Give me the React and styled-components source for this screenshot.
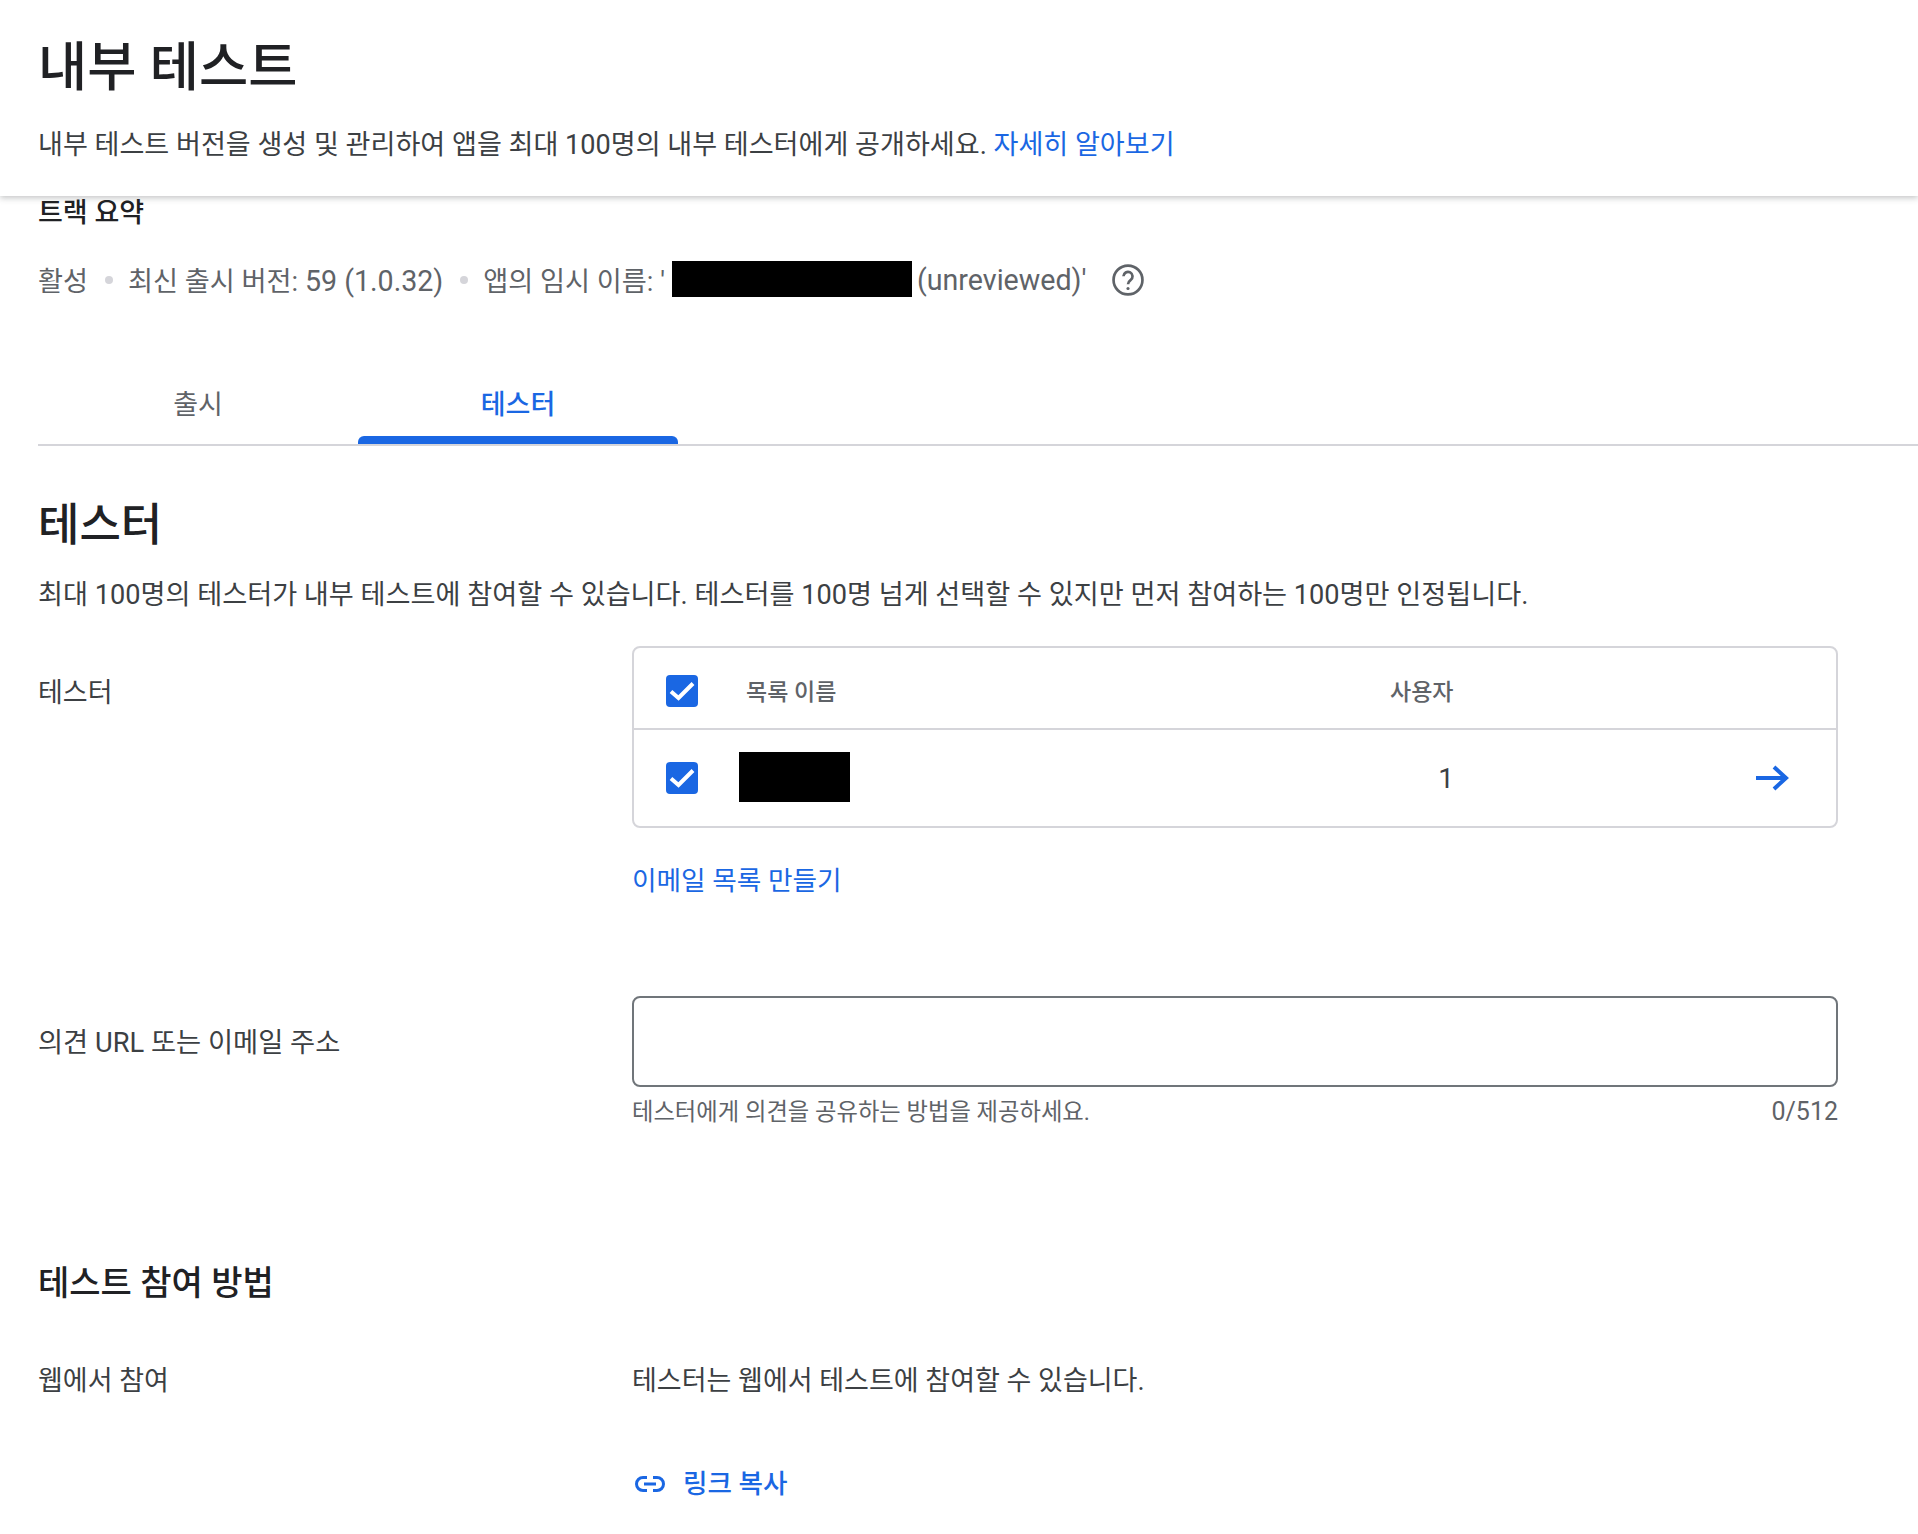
import React from "react"
import styled, { createGlobalStyle } from "styled-components"

const BLUE = "#1a67e3"
const FONT = `Roboto, "Noto Sans CJK KR", sans-serif`

const GlobalStyle = createGlobalStyle`
  html, body { margin: 0; padding: 0; background: #fff; }
  body { font-family: ${FONT}; color: #202124; overflow: hidden; }
  * { box-sizing: border-box; }
`

const Page = styled.div`
  width: 1918px;
  height: 1534px;
  overflow: hidden;
`

const Header = styled.header`
  height: 196px;
  padding: 34px 0 0 38px;
  box-shadow: 0 2px 6px rgba(60, 64, 67, 0.3);
  position: relative;
`

const Title = styled.h1`
  margin: 0;
  font-size: 53.5px;
  line-height: 68px;
  font-weight: 500;
  color: #202124;
`

const Lead = styled.p`
  margin: 25px 0 0;
  font-size: 27.08px;
  line-height: 36px;
  color: #3c4043;
`

const Link = styled.a`
  color: ${BLUE};
  text-decoration: none;
`

const Main = styled.main`
  padding-left: 38px;
`

const TrackTitle = styled.h3`
  margin: 0;
  padding-top: 1px;
  font-size: 27px;
  line-height: 32px;
  font-weight: 500;
  color: #202124;
`

const Status = styled.div`
  display: flex;
  align-items: center;
  height: 40px;
  margin-top: 30px;
  font-size: 27.2px;
  color: #5f6368;
`

const Latin = styled.span`
  font-size: 28.6px;
  white-space: pre;
`

const Unreviewed = styled(Latin)`
  margin-left: -2px;
  padding-top: 2px;
`

const Dot = styled.span`
  width: 8px;
  height: 8px;
  margin: 2px 15px 0 17px;
  border-radius: 50%;
  background: #d5d5da;
`

const Redact = styled.span`
  display: block;
  flex: none;
  width: ${(p) => p.$w}px;
  height: ${(p) => p.$h}px;
  background: #000;
`

const RedactStatus = styled(Redact)`
  margin-left: 7px;
`

const HelpIcon = styled.svg`
  width: 34px;
  height: 34px;
  margin: 2px 0 0 25px;
  color: #5f6368;
`

const Tabs = styled.nav`
  display: flex;
  height: 84px;
  margin-top: 63px;
  border-bottom: 2px solid #d5d5da;
`

const Tab = styled.div`
  position: relative;
  width: 320px;
  padding-top: 25px;
  font-size: 27px;
  line-height: 36px;
  text-align: center;
  color: ${(p) => (p.$active ? BLUE : "#5f6368")};
  font-weight: ${(p) => (p.$active ? 500 : 400)};

  ${(p) =>
    p.$active &&
    `
    &::after {
      content: "";
      position: absolute;
      left: 0;
      right: 0;
      bottom: 0;
      height: 8px;
      border-radius: 6px 6px 0 0;
      background: ${BLUE};
    }
  `}
`

const Heading = styled.h2`
  margin: 52px 0 0;
  font-size: 45px;
  line-height: 56px;
  font-weight: 500;
  color: #202124;
`

const Paragraph = styled.p`
  margin: 23px 0 0;
  font-size: 27.17px;
  line-height: 36px;
  color: #3c4043;
`

const FormRow = styled.div`
  display: grid;
  grid-template-columns: 594px 1206px;
  margin-top: ${(p) => p.$top}px;
`

const Label = styled.div`
  padding-top: ${(p) => p.$pad || 0}px;
  font-size: ${(p) => p.$size || 27}px;
  line-height: 36px;
  color: #3c4043;
`

const Table = styled.div`
  height: 182px;
  border: 2px solid #d5d5da;
  border-radius: 8px;
`

const TableRow = styled.div`
  display: grid;
  grid-template-columns: 32px 692px 64px 1fr;
  align-items: center;
  height: ${(p) => p.$h}px;
  padding: ${(p) => p.$top || 0}px 46px 0 32px;
  border-bottom: ${(p) => (p.$line ? "2px solid #d5d5da" : "none")};
`

const Check = styled.svg`
  width: 32px;
  height: 32px;
`

const HeadCell = styled.div`
  padding-bottom: 2px;
  padding-left: ${(p) => p.$pad || 0}px;
  font-size: 23px;
  font-weight: 500;
  color: #5f6368;
`

const NameCell = styled.div`
  padding: 0 0 2px 41px;
`

const CountCell = styled.div`
  padding-top: 1px;
  font-size: 28px;
  color: #3c4043;
  text-align: right;
`

const ArrowCell = styled.div`
  display: flex;
  justify-content: flex-end;
`

const ArrowIcon = styled.svg`
  width: 36px;
  height: 28px;
`

const CreateLink = styled(Link)`
  display: block;
  margin-top: 35px;
  font-size: 26.7px;
  line-height: 36px;
`

const InputBox = styled.div`
  height: 91px;
  border: 2px solid #70757a;
  border-radius: 8px;
`

const Hints = styled.div`
  display: flex;
  justify-content: space-between;
  align-items: baseline;
  margin-top: 10px;
  font-size: 23.3px;
  line-height: 30px;
  color: #5f6368;
`

const Counter = styled.span`
  font-size: 25px;
`

const SubHeading = styled.h3`
  margin: 133px 0 0;
  font-size: 34px;
  line-height: 46px;
  font-weight: 500;
  color: #202124;
`

const Body = styled.div`
  font-size: 27px;
  line-height: 36px;
  color: #3c4043;
`

const CopyLink = styled(Link)`
  display: flex;
  align-items: center;
  gap: 18px;
  margin-top: 67px;
  padding-left: 3px;
  font-size: 26.6px;
  line-height: 36px;
  font-weight: 500;
`

const Checkbox = () => (
  <Check viewBox="0 0 32 32">
    <rect width="32" height="32" rx="4" fill={BLUE} />
    <path d="M5 16.5l7.5 6.5L27 8.5" fill="none" stroke="#fff" strokeWidth="4" />
  </Check>
)

const App = () => (
  <Page>
    <GlobalStyle />
    <Header>
      <Title>내부 테스트</Title>
      <Lead>
        내부 테스트 버전을 생성 및 관리하여 앱을 최대 100명의 내부 테스터에게 공개하세요.{" "}
        <Link href="#">자세히 알아보기</Link>
      </Lead>
    </Header>
    <Main>
      <TrackTitle>트랙 요약</TrackTitle>
      <Status>
        활성
        <Dot />
        <span>
          최신 출시 버전: <Latin>59 (1.0.32)</Latin>
        </span>
        <Dot />
        앱의 임시 이름: '
        <RedactStatus $w={240} $h={36} />
        <Unreviewed> (unreviewed)'</Unreviewed>
        <HelpIcon viewBox="0 0 24 24" fill="none" stroke="currentColor">
          <circle cx="12" cy="12" r="10.2" strokeWidth="1.9" />
          <path d="M8.8 9.4a3.2 3.2 0 1 1 5 2.7c-1.1.8-1.8 1.4-1.8 2.9" strokeWidth="1.9" />
          <circle cx="12" cy="18" r="1.1" fill="currentColor" stroke="none" />
        </HelpIcon>
      </Status>
      <Tabs>
        <Tab>출시</Tab>
        <Tab $active>테스터</Tab>
      </Tabs>
      <Heading>테스터</Heading>
      <Paragraph>
        최대 100명의 테스터가 내부 테스트에 참여할 수 있습니다. 테스터를 100명 넘게 선택할 수 있지만 먼저 참여하는 100명만 인정됩니다.
      </Paragraph>
      <FormRow $top={33}>
        <Label $pad={29}>테스터</Label>
        <div>
          <Table>
            <TableRow $h={82} $top={6} $line>
              <Checkbox />
              <HeadCell $pad={48}>목록 이름</HeadCell>
              <HeadCell>사용자</HeadCell>
              <div />
            </TableRow>
            <TableRow $h={96}>
              <Checkbox />
              <NameCell>
                <Redact $w={111} $h={50} />
              </NameCell>
              <CountCell>1</CountCell>
              <ArrowCell>
                <ArrowIcon viewBox="0 0 36 28">
                  <path d="M2 14h30M20 3l12 11-12 11" fill="none" stroke={BLUE} strokeWidth="4" />
                </ArrowIcon>
              </ArrowCell>
            </TableRow>
          </Table>
          <CreateLink href="#">이메일 목록 만들기</CreateLink>
        </div>
      </FormRow>
      <FormRow $top={97}>
        <Label $pad={29} $size={27.3}>의견 URL 또는 이메일 주소</Label>
        <div>
          <InputBox />
          <Hints>
            <span>테스터에게 의견을 공유하는 방법을 제공하세요.</span>
            <Counter>0/512</Counter>
          </Hints>
        </div>
      </FormRow>
      <SubHeading>테스트 참여 방법</SubHeading>
      <FormRow $top={57}>
        <Label>웹에서 참여</Label>
        <div>
          <Body>테스터는 웹에서 테스트에 참여할 수 있습니다.</Body>
          <CopyLink href="#">
            <svg width="30" height="16" viewBox="0 0 30 16" fill="none" stroke={BLUE} strokeWidth="3">
              <path d="M12 1.5H8a6.5 6.5 0 0 0 0 13h4M18 1.5h4a6.5 6.5 0 0 1 0 13h-4M9 8h12" />
            </svg>
            링크 복사
          </CopyLink>
        </div>
      </FormRow>
    </Main>
  </Page>
)

export default App
